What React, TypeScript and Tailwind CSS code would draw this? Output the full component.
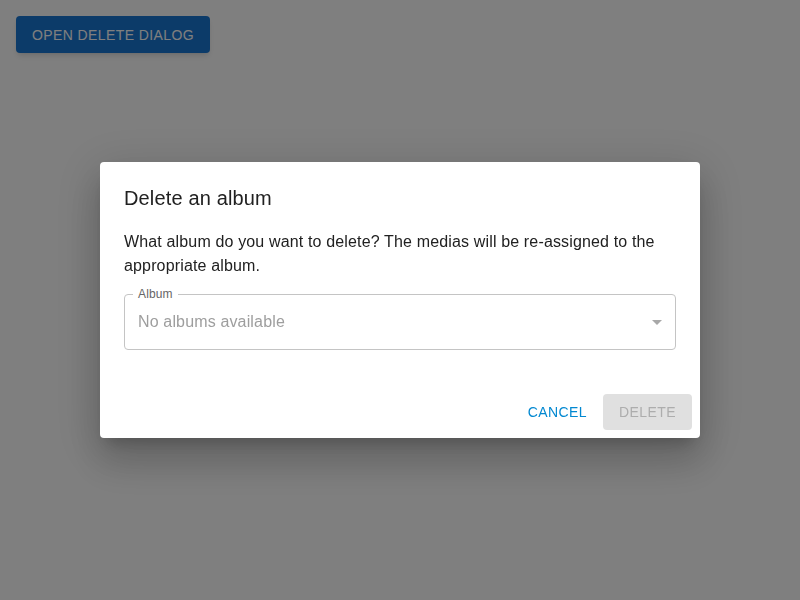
const App: React.FC = () => {
  return (
    <div className="min-h-screen w-full bg-white font-['Liberation_Sans',Arial,sans-serif]">
      {/* trigger button */}
      <div className="p-4">
        <button className="h-[37px] rounded bg-[#1976d2] px-4 text-sm font-medium uppercase tracking-[0.4px] text-white shadow-md">
          Open delete dialog
        </button>
      </div>

      {/* backdrop */}
      <div className="fixed inset-0 flex items-center justify-center bg-black/50">
        {/* dialog */}
        <div className="w-[600px] rounded bg-white shadow-[0_11px_15px_-7px_rgba(0,0,0,0.2),0_24px_38px_3px_rgba(0,0,0,0.14),0_9px_46px_8px_rgba(0,0,0,0.12)]">
          <h2 className="px-6 pt-[20px] pb-[16px] text-xl leading-8 tracking-[0.15px] text-[#212121]">Delete an album</h2>

          <div className="px-6 pb-[36px]">
            <p className="text-base leading-6 tracking-[0.15px] text-[#212121]">
              What album do you want to delete? The medias will be re-assigned to the appropriate album.
            </p>

            {/* select field */}
            <div className="relative mt-4 flex h-[56px] items-center justify-between rounded border border-[#c4c4c4] pl-[13px] pr-[6px]">
              <span className="absolute -top-[9px] left-[8px] bg-white px-[5px] text-xs leading-4 tracking-[0.15px] text-[#666]">Album</span>
              <span className="text-base tracking-[0.15px] text-[#9e9e9e]">No albums available</span>
              <svg width="24" height="24" viewBox="0 0 24 24" className="fill-[#a8a8a8]">
                <path d="M7 10l5 5 5-5z" />
              </svg>
            </div>
          </div>

          {/* actions */}
          <div className="flex items-center justify-end gap-2 p-2">
            <button className="h-9 rounded px-2 text-sm font-medium uppercase tracking-[0.4px] text-[#0288d1]">Cancel</button>
            <button disabled className="h-9 w-[89px] rounded bg-[#e0e0e0] px-4 text-sm font-medium uppercase tracking-[0.4px] text-[#adadad]">
              Delete
            </button>
          </div>
        </div>
      </div>
    </div>
  );
};

export default App;
